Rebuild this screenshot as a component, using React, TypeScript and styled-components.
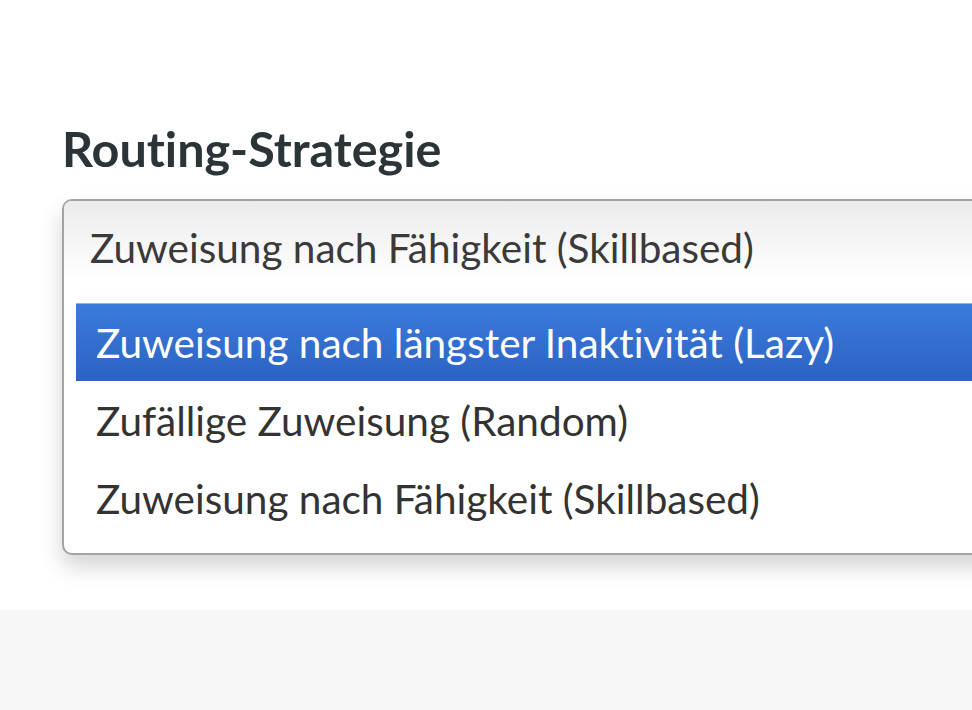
import styled, { createGlobalStyle } from 'styled-components';

const GlobalStyle = createGlobalStyle`
	html,
	body {
		margin: 0;
		padding: 0;
		overflow: hidden;
		background: #ffffff;
	}

	body {
		font-family: Lato, 'Noto Sans', 'Liberation Sans', sans-serif;
		font-variant-ligatures: none;
	}
`;

const Page = styled.div`
	display: flex;
	flex-direction: column;
	width: 972px;
	height: 710px;
	overflow: hidden;
`;

const Panel = styled.section`
	height: 610px;
	box-sizing: border-box;
	padding: 118px 0 0 62px;
	background: #ffffff;
	overflow: hidden;
`;

const Footer = styled.div`
	flex: 1;
	background: #f7f7f7;
`;

const Label = styled.h2`
	margin: 0 0 21px;
	font-size: 48.5px;
	line-height: 60px;
	font-weight: 700;
	color: #2b3437;
`;

const SelectBox = styled.div`
	width: 1000px;
	border: 2px solid #a3a3a3;
	border-radius: 10px;
	background: #ffffff;
	box-shadow: 0 12px 22px rgba(0, 0, 0, 0.17);
	overflow: hidden;
`;

const Current = styled.div`
	display: flex;
	align-items: center;
	height: 92px;
	padding-left: 26px;
	background: linear-gradient(#ebebeb, #ffffff 85%);
	font-size: 40.5px;
	color: #3a3a3a;
`;

const OptionList = styled.ul`
	list-style: none;
	margin: 0;
	padding: 10px 0 16px 12px;
`;

const Option = styled.li<{ $active?: boolean }>`
	display: flex;
	align-items: center;
	height: 78px;
	padding-left: 20px;
	font-size: 40.5px;
	color: ${({ $active }) => ($active ? '#ffffff' : '#333333')};
	background: ${({ $active }) =>
		$active ? 'linear-gradient(#3b7bdb, #2c63c4)' : 'transparent'};
	box-shadow: ${({ $active }) =>
		$active ? 'inset 0 1px 0 #8fb4ea' : 'none'};
`;

const options = [
	'Zuweisung nach längster Inaktivität (Lazy)',
	'Zufällige Zuweisung (Random)',
	'Zuweisung nach Fähigkeit (Skillbased)',
];

const App = () => {
	return (
		<Page>
			<GlobalStyle />
			<Panel>
				<Label>Routing-Strategie</Label>
				<SelectBox>
					<Current>Zuweisung nach Fähigkeit (Skillbased)</Current>
					<OptionList>
						{options.map((option, index) => (
							<Option key={option} $active={index === 0}>
								{option}
							</Option>
						))}
					</OptionList>
				</SelectBox>
			</Panel>
			<Footer />
		</Page>
	);
};

export default App;
